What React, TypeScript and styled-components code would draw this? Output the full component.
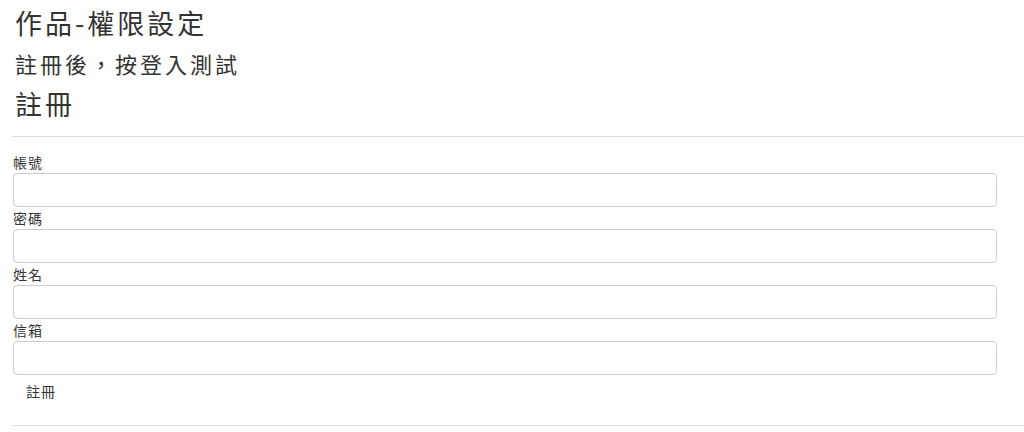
import React from "react";
import styled, { createGlobalStyle } from "styled-components";

const Global = createGlobalStyle`
  html, body { margin: 0; padding: 0; background: #fff; }
  body {
    font-family: "Noto Sans CJK TC", "Noto Sans TC", "Noto Sans", sans-serif;
    color: #333;
    overflow: hidden;
  }
`;

const Page = styled.div`
  padding: 0 0 0 13px;
  display: flex;
  flex-direction: column;
`;

const Heading = styled.div<{ $size: number; $lh: number; $ls: number }>`
  font-size: ${(p) => p.$size}px;
  line-height: ${(p) => p.$lh}px;
  letter-spacing: ${(p) => p.$ls}px;
  padding-left: 2px;
  font-weight: 400;
  color: #333;
  white-space: nowrap;
`;

const Rule = styled.hr<{ $top?: number }>`
  border: 0;
  border-top: 1px solid #ddd;
  margin: ${(p) => p.$top ?? 0}px 0 0;
  width: 100%;
`;

const Form = styled.form`
  display: flex;
  flex-direction: column;
  padding: 14px 27px 0 0;
`;

const Label = styled.label`
  font-size: 14px;
  letter-spacing: 1px;
  line-height: 22px;
  height: 22px;
  color: #333;
`;

const Input = styled.input`
  box-sizing: border-box;
  height: 34px;
  width: 100%;
  margin: 0;
  border: 1px solid #ccc;
  border-radius: 4px;
  outline: none;
  font: inherit;
  padding: 6px 12px;
`;

const Button = styled.button`
  align-self: flex-start;
  background: transparent;
  border: 0;
  font-family: inherit;
  font-size: 14px;
  letter-spacing: 1px;
  color: #333;
  padding: 6px 13px;
  margin: 0 0 18px;
  line-height: 20px;
`;

export default function App() {
  const fields = ["帳號", "密碼", "姓名", "信箱"];
  return (
    <>
      <Global />
      <Page lang="zh-TW">
        <Heading $size={27} $lh={46} $ls={3}>作品-權限設定</Heading>
        <Heading $size={22} $lh={34} $ls={3}>註冊後，按登入測試</Heading>
        <Heading $size={27} $lh={48} $ls={3}>註冊</Heading>
        <Rule $top={8} />
        <Form onSubmit={(e) => e.preventDefault()}>
          {fields.map((f) => (
            <React.Fragment key={f}>
              <Label>{f}</Label>
              <Input type={f === "密碼" ? "password" : "text"} />
            </React.Fragment>
          ))}
          <Button type="submit">註冊</Button>
        </Form>
        <Rule />
      </Page>
    </>
  );
}
